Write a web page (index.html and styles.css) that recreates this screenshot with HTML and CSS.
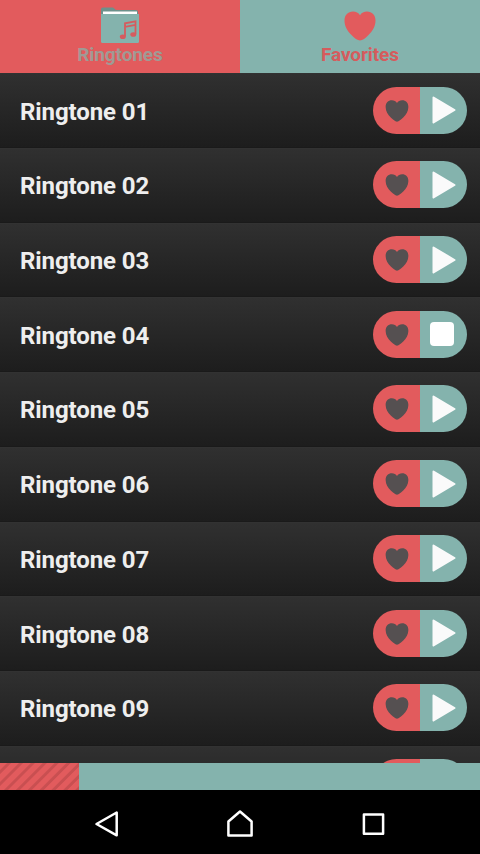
FILE: index.html
```html
<!DOCTYPE html>
<html lang="en">
<head>
    <meta charset="UTF-8">
    <meta name="viewport" content="width=device-width, initial-scale=1.0">
    <title>Ringtones</title>
    <link rel="stylesheet" href="styles.css">
</head>
<body>
    <svg class="defs" width="0" height="0">
        <symbol id="heart" viewBox="0 0 32 30">
            <path d="M16 29.500C13.500 29.500 10.500 27 7.500 24C3.500 20 0.500 15.500 0.500 9.500C0.500 4 4 0.500 9 0.500C12 0.500 14.500 1.800 16 4.200C17.500 1.800 20 0.500 23 0.500C28 0.500 31.500 4 31.500 9.500C31.500 15.500 28.500 20 24.500 24C21.500 27 18.500 29.500 16 29.500Z"/>
        </symbol>
        <symbol id="play" viewBox="0 0 24 28">
            <path d="M1.500 1.500L22.500 14L1.500 26.500Z" stroke-width="2" stroke-linejoin="round"/>
        </symbol>
    </svg>
    <div class="main">
        <div class="tabs">
            <div class="tab ringtones">
                <svg class="folder" viewBox="0 0 40 36">
                    <path class="back" d="M1 6V2Q1 0.500 3 0.500H13L16 3H36Q38 3 38 5V9H1Z"/>
                    <rect class="paper" x="3" y="4.500" width="34" height="4"/>
                    <path class="front" d="M1 7H39V34.500Q39 36 37.500 36H2.500Q1 36 1 34.500Z"/>
                    <path class="note" d="M25 29.500V16.300L35.500 14.300V27M25 19.800L35.500 17.800"/>
                    <ellipse class="dot" cx="22.800" cy="29.800" rx="3" ry="2.300"/>
                    <ellipse class="dot" cx="33.300" cy="27.500" rx="3" ry="2.300"/>
                </svg>
                <span>Ringtones</span>
            </div>
            <div class="tab favorites">
                <svg class="big-heart"><use href="#heart"/></svg>
                <span>Favorites</span>
            </div>
        </div>
        <div class="list" id="list"></div>
        <div class="progress">
            <div class="bar"></div>
        </div>
        <div class="nav">
            <svg viewBox="0 0 26 30"><path d="M22.700 3.500V26.300L2.500 15Z"/></svg>
            <svg viewBox="0 0 26 30"><path d="M1.400 26.500V12.500L13 2.500L24.600 12.500V26.500Z"/></svg>
            <svg viewBox="0 0 26 30"><path d="M3.900 5.500H23.100V24.700H3.900Z"/></svg>
        </div>
    </div>
    <script>
        const list = document.getElementById('list');
        const playing = 4;

        for (let i = 1; i <= 10; i++) {
            const name = 'Ringtone ' + String(i).padStart(2, '0');
            const icon = i === playing
                ? '<span class="stop"></span>'
                : '<svg class="play"><use href="#play"/></svg>';
            list.innerHTML += `
                <div class="row">
                    <div class="name">${name}</div>
                    <div class="pill">
                        <div class="fav"><svg class="heart"><use href="#heart"/></svg></div>
                        <div class="control">${icon}</div>
                    </div>
                </div>`;
        }
    </script>
</body>
</html>
```
FILE: styles.css
```css
body {
    margin: 0;
    background: #000;
    font-family: Roboto, "Liberation Sans", sans-serif;
}
.defs {
    position: absolute;
}
.main {
    height: 854px;
    width: 480px;
    display: flex;
    flex-direction: column;
    overflow: hidden;
}
.tabs {
    display: flex;
    height: 73.4px;
    flex-shrink: 0;
}
.tab {
    flex: 1;
    display: flex;
    flex-direction: column;
    align-items: center;
    font-size: 19px;
    font-weight: bold;
    line-height: 22px;
    letter-spacing: -0.1px;
}
.ringtones {
    background: #e25b5d;
    color: #a09a94;
}
.favorites {
    background: #84b3ad;
    color: #d65b5d;
}
.folder {
    width: 40px;
    height: 36px;
    margin: 7px 0 1px;
}
.back {
    fill: #6d918b;
}
.paper {
    fill: #fff;
}
.front {
    fill: #84b3ad;
}
.note {
    fill: none;
    stroke: #d55c5f;
    stroke-width: 1.8;
}
.dot {
    fill: #d55c5f;
}
.big-heart {
    width: 32px;
    height: 30px;
    margin: 11px 0 3px;
    fill: #e25b5d;
}
.list {
    flex: 1;
    min-height: 0;
    overflow: hidden;
    background: #1c1c1c;
}
.row {
    height: 74.7px;
    box-sizing: border-box;
    display: flex;
    align-items: center;
    justify-content: space-between;
    padding: 0 13px 0 20px;
    background: linear-gradient(#303030, #1d1d1d);
    border-top: 1px solid #323232;
    border-bottom: 1px solid #1a1a1a;
}
.name {
    color: #eee;
    font-size: 24px;
    font-weight: bold;
    line-height: 28px;
    letter-spacing: -0.1px;
    padding-top: 2px;
}
.pill {
    display: flex;
    width: 94px;
    height: 47px;
    margin-bottom: 1px;
    border-radius: 24px;
    overflow: hidden;
}
.fav, .control {
    display: flex;
    flex: 1;
    align-items: center;
    justify-content: center;
}
.fav {
    background: #e25b5d;
}
.control {
    background: #84b3ad;
}
.heart {
    width: 24px;
    height: 22px;
    fill: #555051;
    margin-top: 1px;
}
.play {
    width: 24px;
    height: 28px;
    fill: #fafafa;
    stroke: #fafafa;
}
.stop {
    width: 24px;
    height: 24px;
    margin-right: 4px;
    border-radius: 4px;
    background: #fff;
}
.progress {
    height: 27px;
    flex-shrink: 0;
    background: #84b3ad;
}
.bar {
    width: 79px;
    height: 100%;
    background: repeating-linear-gradient(135deg, #e25b5d 0 4.5px, #c94f51 5.5px 7.5px, #e25b5d 8.4px);
}
.nav {
    height: 64px;
    box-sizing: border-box;
    padding-top: 4px;
    flex-shrink: 0;
    display: flex;
    align-items: center;
    justify-content: center;
    gap: 107px;
    background: #000;
}
.nav svg {
    width: 26px;
    height: 30px;
    fill: none;
    stroke: #fff;
    stroke-width: 2.5;
    stroke-linejoin: round;
}
```
